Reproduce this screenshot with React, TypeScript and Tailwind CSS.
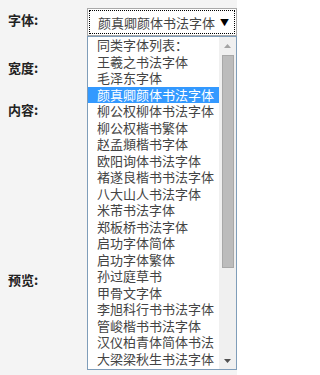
const fonts = [
  '同类字体列表：',
  '王羲之书法字体',
  '毛泽东字体',
  '颜真卿颜体书法字体',
  '柳公权柳体书法字体',
  '柳公权楷书繁体',
  '赵孟頫楷书字体',
  '欧阳询体书法字体',
  '褚遂良楷书书法字体',
  '八大山人书法字体',
  '米芾书法字体',
  '郑板桥书法字体',
  '启功字体简体',
  '启功字体繁体',
  '孙过庭草书',
  '甲骨文字体',
  '李旭科行书书法字体',
  '管峻楷书书法字体',
  '汉仪柏青体简体书法',
  '大梁梁秋生书法字体',
]

const selected = 3

export default function App() {
  return (
    <div className="relative h-[375px] w-[237px] overflow-hidden bg-[#f4f4f4] font-['Noto_Sans_CJK_SC',sans-serif] text-[13px] text-[#333]">
      {/* Labels column */}
      <div className="absolute left-[8px] top-[11px] text-[13px] font-bold leading-[18px] text-[#222]">字体:</div>
      <div className="absolute left-[8px] top-[59px] text-[13px] font-bold leading-[18px] text-[#222]">宽度:</div>
      <div className="absolute left-[8px] top-[101px] text-[13px] font-bold leading-[18px] text-[#222]">内容:</div>
      <div className="absolute left-[8px] top-[271px] text-[13px] font-bold leading-[18px] text-[#222]">预览:</div>

      {/* Select box */}
      <div className="absolute left-[87px] top-[8px] h-[28px] w-[150px] border border-[#a9a9a9] bg-white p-px">
        <div className="flex h-full items-center justify-between border border-dotted border-black pl-[8px] pr-[5px]">
          <span className="leading-none text-[#444]">{fonts[selected]}</span>
          <span className="text-[9px] leading-none text-black">▼</span>
        </div>
      </div>

      {/* Open dropdown list */}
      <div className="absolute left-[87px] top-[36px] flex h-[334px] w-[150px] border border-[#7f9db9] bg-white">
        <div className="flex-1 overflow-hidden">
          {fonts.map((f, i) => (
            <div
              key={f}
              className={
                i === selected
                  ? 'h-[16.5px] bg-[#3399ff] pl-[9px] leading-[16.5px] text-white'
                  : 'h-[16.5px] pl-[9px] leading-[16.5px] text-[#444]'
              }
            >
              {f}
            </div>
          ))}
        </div>
        <div className="flex w-[17px] flex-col items-center bg-[#f0f0f0]">
          <div className="flex h-[17px] w-full items-center justify-center">
            <svg width="7" height="4" viewBox="0 0 7 4">
              <path d="M3.5 0 L7 4 L0 4 Z" fill="#a3a3a3" />
            </svg>
          </div>
          <div className="mt-px h-[213px] w-[12px] border border-[#a8a8a8] bg-[#bcbcbc]" />
          <div className="flex-1" />
          <div className="flex h-[17px] w-full items-center justify-center">
            <svg width="7" height="4" viewBox="0 0 7 4">
              <path d="M0 0 L7 0 L3.5 4 Z" fill="#505050" />
            </svg>
          </div>
        </div>
      </div>
    </div>
  )
}
